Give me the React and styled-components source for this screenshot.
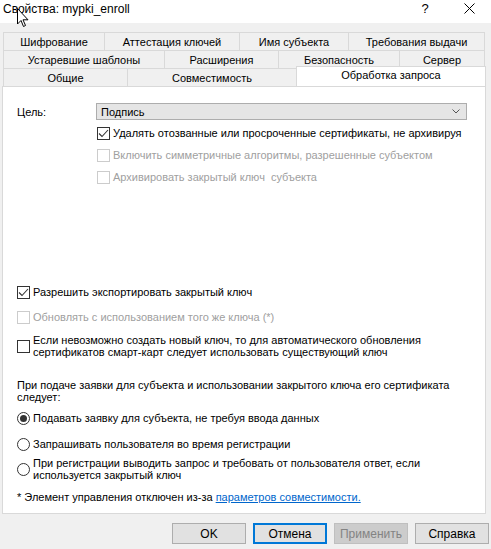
import styled, { createGlobalStyle } from "styled-components";

const Global = createGlobalStyle`
  body {
    margin: 0;
    background: #f0f0f0;
    font-family: "Liberation Sans", Arial, sans-serif;
    font-size: 11px;
    color: #000;
  }
`;

const Window = styled.div`
  position: relative;
  width: 491px;
  height: 549px;
  background: #f0f0f0;
  overflow: hidden;
`;
const TitleBar = styled.div`
  height: 23px;
  background: #fff;
  display: flex;
  align-items: center;
  padding-left: 3px;
  font-size: 12px;
`;
const Title = styled.span`
  flex: 1;
  margin-top: -6px;
`;
const TitleButton = styled.span`
  width: 44px;
  text-align: center;
  margin-top: -6px;
  font-size: 13px;
  display: flex;
  justify-content: center;
`;
const Tabs = styled.div`
  margin: 9px 0 0 3px;
  width: 482px;
  position: relative;
`;
const TabRow = styled.div`
  display: grid;
  grid-template-columns: ${p => p.$cols};
  height: 18px;
`;
const Tab = styled.div`
  border-top: 1px solid #d9d9d9;
  border-left: 1px solid #d9d9d9;
  &:last-child { border-right: 1px solid #d9d9d9; }
  display: flex;
  align-items: center;
  justify-content: center;
  background: #f0f0f0;
`;
const ActiveTab = styled.div`
  position: absolute;
  left: 293px;
  top: 34px;
  width: 190px;
  height: 20px;
  background: #fff;
  border: 1px solid #d9d9d9;
  border-bottom: none;
  display: flex;
  justify-content: center;
  padding-top: 2px;
  box-sizing: border-box;
  z-index: 2;
`;
const Panel = styled.div`
  margin-left: 2px;
  width: 484px;
  height: 428px;
  box-sizing: border-box;
  background: #fff;
  border: 1px solid #d9d9d9;
  padding: 16px 0 0 14px;
  display: flex;
  flex-direction: column;
`;
const ComboRow = styled.div`
  display: flex;
  align-items: center;
  height: 17px;
`;
const Label = styled.span`
  width: 79px;
`;
const Combo = styled.div`
  width: 371px;
  height: 17px;
  box-sizing: border-box;
  background: #e5e5e5;
  border: 1px solid #adadad;
  display: flex;
  align-items: center;
  justify-content: space-between;
  padding: 0 6px 0 4px;
`;
const Option = styled.label`
  display: flex;
  align-items: center;
  gap: 3px;
  margin-top: ${p => p.$mt}px;
  margin-left: ${p => p.$indent || 0}px;
  color: ${p => (p.$disabled ? "#a0a0a0" : "#000")};
  line-height: 12px;
  min-height: 14px;
  white-space: pre;
`;
const Box = styled.span`
  flex: none;
  width: 13px;
  height: 13px;
  box-sizing: border-box;
  border: 1px solid ${p => (p.$disabled ? "#cccccc" : "#333")};
  background: #fff;
  display: flex;
  align-items: center;
  justify-content: center;
`;
const Radio = styled.span`
  flex: none;
  width: 13px;
  height: 13px;
  box-sizing: border-box;
  border: 1px solid #333;
  border-radius: 50%;
  display: flex;
  align-items: center;
  justify-content: center;
  &::after {
    content: "";
    width: 7px;
    height: 7px;
    border-radius: 50%;
    background: ${p => (p.$checked ? "#333" : "transparent")};
  }
`;
const Paragraph = styled.div`
  margin-top: ${p => p.$mt}px;
  line-height: 12px;
  width: 450px;
`;
const Link = styled.span`
  color: #0066cc;
  text-decoration: underline;
`;
const Buttons = styled.div`
  display: flex;
  gap: 7px;
  margin: 9px 0 0 172px;
`;
const Button = styled.div`
  width: 74px;
  height: 21px;
  box-sizing: border-box;
  display: flex;
  align-items: center;
  justify-content: center;
  font-size: 12px;
  background: ${p => (p.$disabled ? "#cccccc" : "#e1e1e1")};
  color: ${p => (p.$disabled ? "#838383" : "#000")};
  border: ${p => (p.$focus ? "2px solid #0078d7" : p.$disabled ? "1px solid #bfbfbf" : "1px solid #adadad")};
`;
const Cursor = styled.svg`
  position: absolute;
  left: 17px;
  top: 8px;
  z-index: 5;
`;

const Check = () => (
  <svg width="11" height="9" viewBox="0 0 11 9">
    <path d="M1 4.5 L4 7.5 L10 1" fill="none" stroke="#333" strokeWidth="1.1" />
  </svg>
);

const CheckOption = ({ mt, indent, checked, disabled, children }) => (
  <Option $mt={mt} $indent={indent} $disabled={disabled}>
    <Box $disabled={disabled}>{checked && <Check />}</Box>
    <span>{children}</span>
  </Option>
);

const RadioOption = ({ mt, checked, children }) => (
  <Option $mt={mt}>
    <Radio $checked={checked} />
    <span>{children}</span>
  </Option>
);

export default function App() {
  return (
    <Window>
      <Global />
      <TitleBar>
        <Title>Свойства: mypki_enroll</Title>
        <TitleButton>?</TitleButton>
        <TitleButton>
          <svg width="11" height="11" viewBox="0 0 11 11">
            <path d="M0.5 0.5 L10.5 10.5 M10.5 0.5 L0.5 10.5" stroke="#000" strokeWidth="1" />
          </svg>
        </TitleButton>
      </TitleBar>
      <Cursor width="13" height="20" viewBox="0 0 13 20">
        <path d="M0.5 0.5 L0.5 16 L4 12.5 L6.5 18.5 L8.5 17.5 L6 11.8 L11 11.8 Z" fill="#fff" stroke="#000" strokeWidth="1" />
      </Cursor>
      <Tabs>
        <TabRow $cols="101px 135px 109px 137px">
          <Tab>Шифрование</Tab>
          <Tab>Аттестация ключей</Tab>
          <Tab>Имя субъекта</Tab>
          <Tab>Требования выдачи</Tab>
        </TabRow>
        <TabRow $cols="161px 114px 121px 86px">
          <Tab>Устаревшие шаблоны</Tab>
          <Tab>Расширения</Tab>
          <Tab>Безопасность</Tab>
          <Tab>Сервер</Tab>
        </TabRow>
        <TabRow $cols="124px 169px 189px">
          <Tab>Общие</Tab>
          <Tab>Совместимость</Tab>
          <Tab />
        </TabRow>
        <ActiveTab>Обработка запроса</ActiveTab>
      </Tabs>
      <Panel>
        <ComboRow>
          <Label>Цель:</Label>
          <Combo>
            <span>Подпись</span>
            <svg width="8" height="5" viewBox="0 0 8 5">
              <path d="M0.5 0.5 L4 4 L7.5 0.5" fill="none" stroke="#555" strokeWidth="1" />
            </svg>
          </Combo>
        </ComboRow>
        <CheckOption mt={6} indent={80} checked>
          Удалять отозванные или просроченные сертификаты, не архивируя
        </CheckOption>
        <CheckOption mt={8} indent={80} disabled>
          Включить симметричные алгоритмы, разрешенные субъектом
        </CheckOption>
        <CheckOption mt={8} indent={80} disabled>
          {"Архивировать закрытый ключ  субъекта"}
        </CheckOption>
        <CheckOption mt={101} checked>
          Разрешить экспортировать закрытый ключ
        </CheckOption>
        <CheckOption mt={11} disabled>
          Обновлять с использованием того же ключа (*)
        </CheckOption>
        <CheckOption mt={10}>
          {"Если невозможно создать новый ключ, то для автоматического обновления\nсертификатов смарт-карт следует использовать существующий ключ"}
        </CheckOption>
        <Paragraph $mt={21}>
          При подаче заявки для субъекта и использовании закрытого ключа его сертификата
          <br />
          следует:
        </Paragraph>
        <RadioOption mt={8} checked>
          Подавать заявку для субъекта, не требуя ввода данных
        </RadioOption>
        <RadioOption mt={12}>Запрашивать пользователя во время регистрации</RadioOption>
        <RadioOption mt={6}>
          {"При регистрации выводить запрос и требовать от пользователя ответ, если\nиспользуется закрытый ключ"}
        </RadioOption>
        <Paragraph $mt={10}>
          * Элемент управления отключен из-за <Link>параметров совместимости.</Link>
        </Paragraph>
      </Panel>
      <Buttons>
        <Button>OK</Button>
        <Button $focus>Отмена</Button>
        <Button $disabled>Применить</Button>
        <Button>Справка</Button>
      </Buttons>
    </Window>
  );
}
